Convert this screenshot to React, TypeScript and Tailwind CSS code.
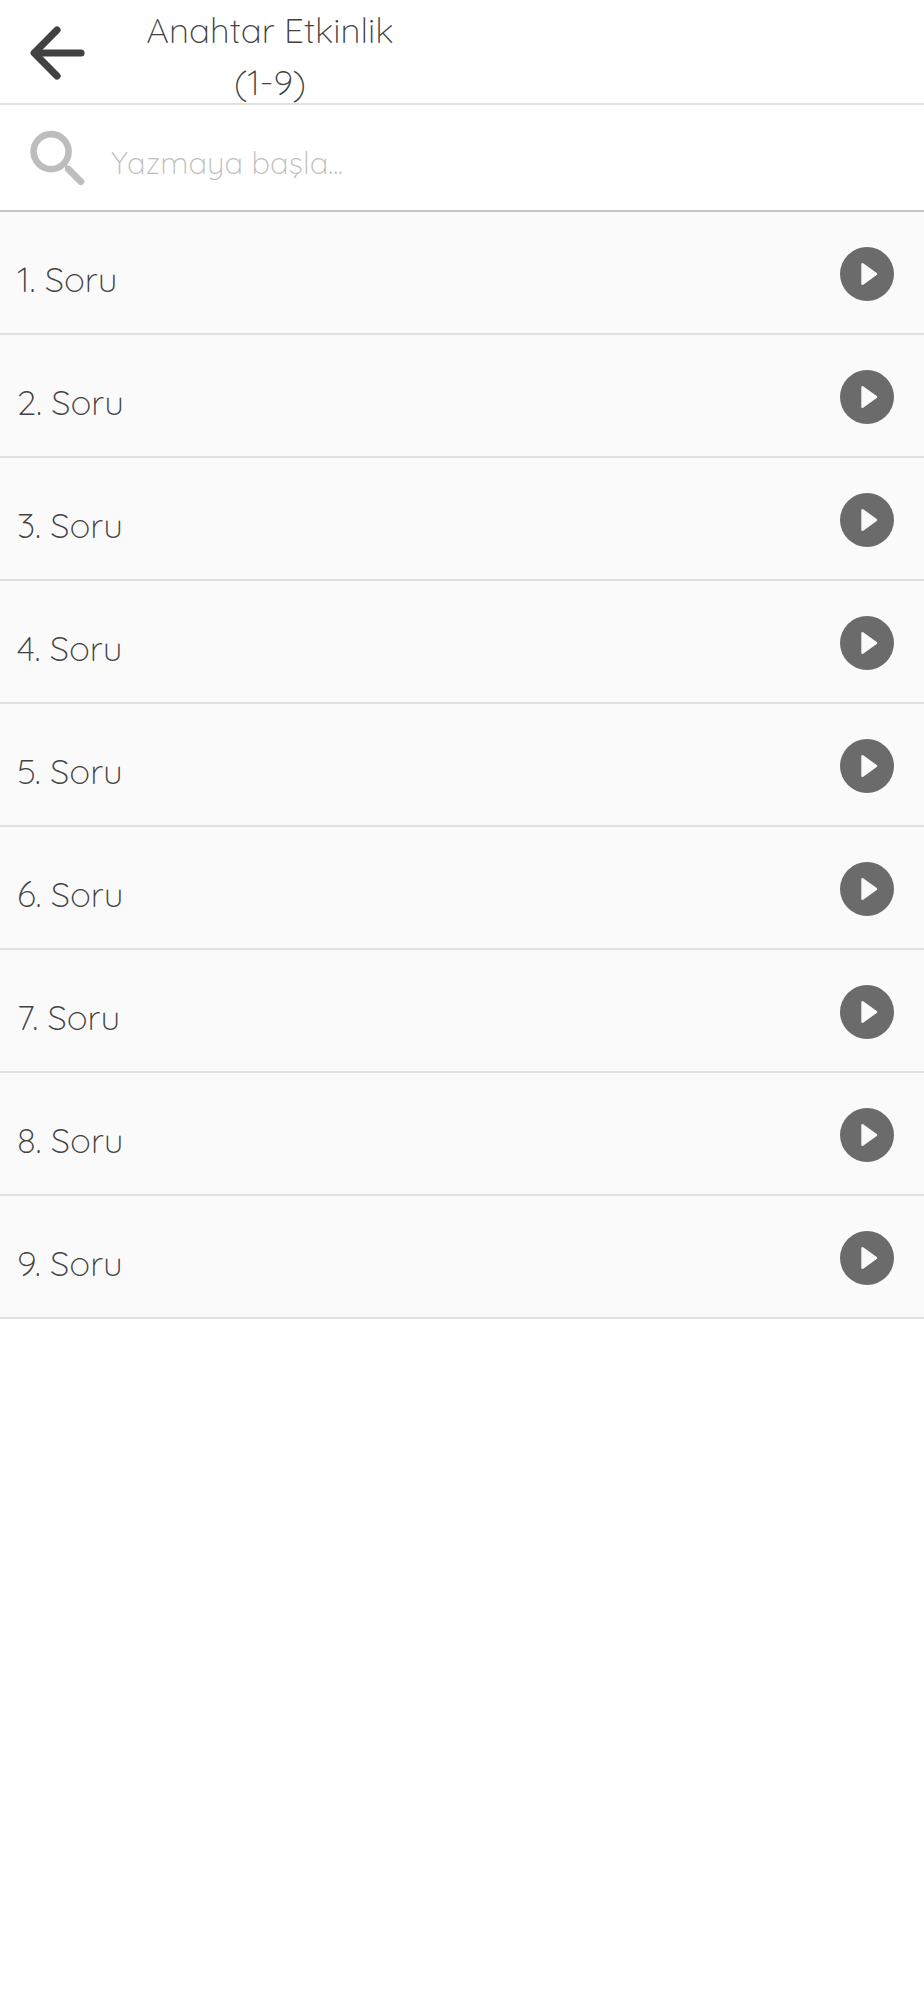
import { useState } from "react";

const questions = Array.from({ length: 9 }, (_, i) => `${i + 1}. Soru`);

function BackIcon() {
  return (
    <svg viewBox="0 0 56 56" className="size-14" fill="none" stroke="#424242" strokeWidth="7.2" strokeLinecap="round" strokeLinejoin="round" aria-hidden="true">
      <path d="M27 5 4.2 28 27 51" />
      <path d="M5 28h46" />
    </svg>
  );
}

function SearchIcon() {
  return (
    <svg viewBox="0 0 56 56" className="size-14" fill="none" stroke="#bdbdbd" role="img" aria-label="Ara">
      <circle cx="21.1" cy="21.6" r="17.5" strokeWidth="6.6" />
      <path d="m38.6 39.4 12.2 12.2" strokeWidth="7" strokeLinecap="round" />
      <path d="M35 40.5V36.8L33 34.5l2-1.5 3 3h3z" fill="#bdbdbd" stroke="none" />
    </svg>
  );
}

function PlayIcon() {
  return (
    <svg viewBox="0 0 54 54" className="size-[54px] shrink-0" aria-hidden="true">
      <circle cx="27" cy="27" r="27" fill="#6b6b6b" />
      <path d="M22.5 17.3v19.4L36 27Z" fill="#fafafa" stroke="#fafafa" strokeWidth="2.4" strokeLinejoin="round" />
    </svg>
  );
}

export default function App() {
  const [query, setQuery] = useState("");
  const visible = questions.filter((q) => q.toLowerCase().includes(query.toLowerCase()));

  return (
    <div className="min-h-screen bg-white font-['Quicksand','Inter',sans-serif] font-[350] text-[#424242]">
      <header className="flex h-[105px] items-start border-b-2 border-[#e0e0e0] pl-[30px]">
        <button type="button" aria-label="Geri" className="mt-[25px] shrink-0">
          <BackIcon />
        </button>
        <h1 className="ml-12 w-[272px] pt-1 text-center text-[35px] leading-[52px] font-[350]">Anahtar Etkinlik (1-9)</h1>
      </header>

      <div className="flex h-[107px] items-start border-b-2 border-[#c4c4c4] pl-[30px]">
        <label htmlFor="search" className="mt-[25px] shrink-0">
          <SearchIcon />
        </label>
        <input
          id="search"
          type="text"
          value={query}
          onChange={(e) => setQuery(e.target.value)}
          placeholder="Yazmaya başla..."
          className="mt-[29px] ml-[25px] h-14 min-w-0 flex-1 bg-transparent text-[31px] outline-none placeholder:text-[#bdbdbd]"
        />
      </div>

      <ul>
        {visible.map((q) => (
          <li key={q} className="border-b-2 border-[#e0e0e0] bg-[#fafafa]">
            <button type="button" className="flex w-full items-center justify-between pt-[35px] pr-[30px] pb-8 pl-[17px] text-left">
              <span className="pt-[10px] text-[35px] leading-[44px]">{q}</span>
              <PlayIcon />
            </button>
          </li>
        ))}
      </ul>
    </div>
  );
}
